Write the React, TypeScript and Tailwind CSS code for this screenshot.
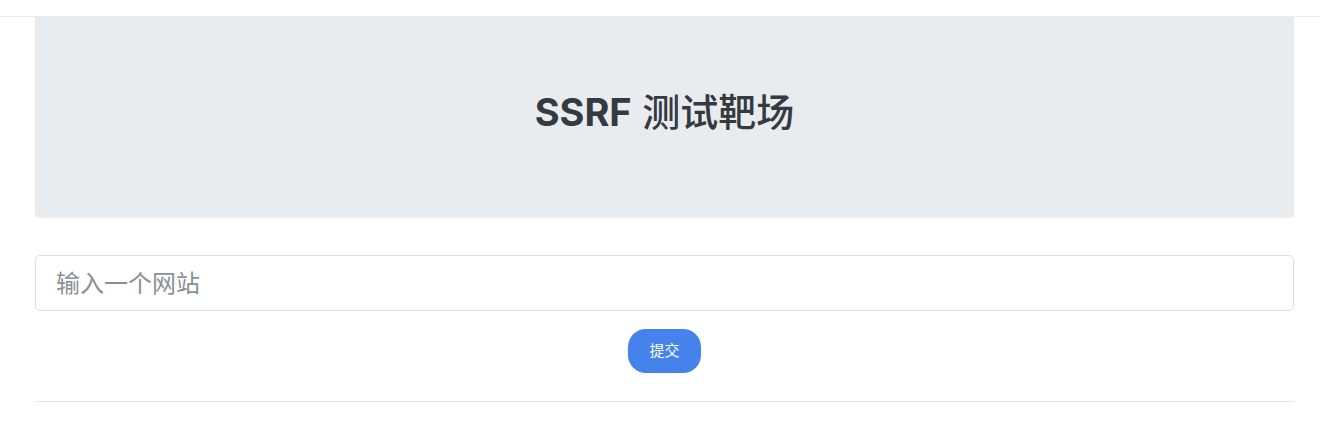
export default function App() {
  return (
    <div className="min-h-[436px] bg-white font-['Inter','Noto_Sans_CJK_SC',sans-serif]">
      <div className="h-[17px] border-b border-[#ececec]" />
      <div className="pl-[35px] pr-[26px]">
        <div className="flex h-[200px] items-center justify-center rounded-b-[4px] bg-[#e8ecef] pb-[10px] shadow-[0_1px_2px_rgba(0,0,0,0.06)]">
          <h1 className="text-[38px] leading-none text-[#343a40]">
            <span className="font-bold">SSRF</span> <span className="font-medium">测试靶场</span>
          </h1>
        </div>

        <form className="mt-[38px] flex flex-col items-center" onSubmit={(e) => e.preventDefault()}>
          <input
            type="text"
            placeholder="输入一个网站"
            className="h-[56px] w-full rounded-[5px] border border-[#dedede] px-[20px] text-[24px] text-[#495057] placeholder:text-[#8a9097] outline-none"
          />
          <button
            type="submit"
            className="mt-[18px] h-[44px] w-[73px] rounded-[18px] bg-[#4582ec] text-[15px] text-white"
          >
            提交
          </button>
        </form>

        <hr className="mt-[28px] border-t border-[#e5e5e5]" />
      </div>
    </div>
  )
}
